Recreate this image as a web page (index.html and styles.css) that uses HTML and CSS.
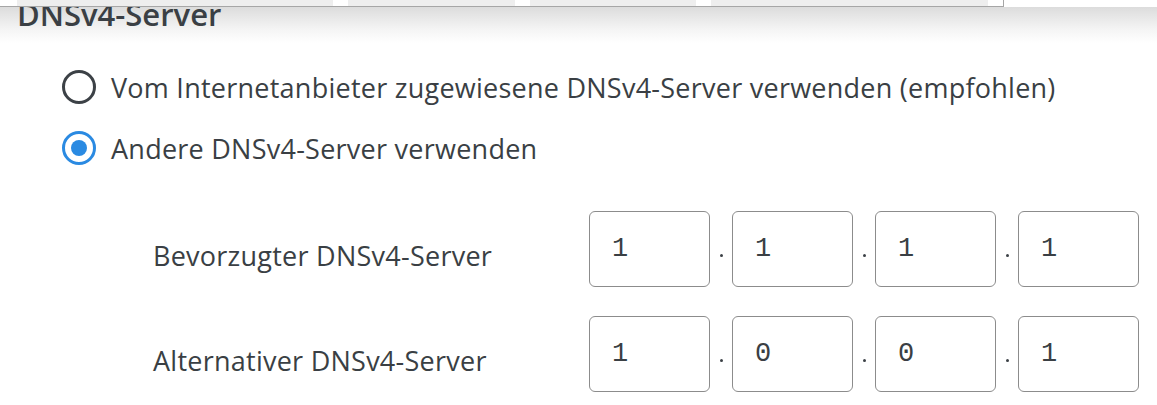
FILE: index.html
```html
<!DOCTYPE html>
<html lang="de">
<head>
<meta charset="utf-8">
<title>DNSv4-Server</title>
<link rel="stylesheet" href="styles.css">
</head>
<body>
<header class="tabbar">
  <div class="tabs">
    <div class="tab tab-1"></div>
    <div class="tab tab-2"></div>
    <div class="tab tab-3"></div>
    <div class="tab tab-4"></div>
  </div>
</header>
<main class="content">
  <h2 class="section-title">DNSv4-Server</h2>
  <div class="options">
    <label class="option">
      <span class="radio"></span>
      <span class="option-text">Vom Internetanbieter zugewiesene DNSv4-Server verwenden (empfohlen)</span>
    </label>
    <label class="option">
      <span class="radio radio-checked"><span class="radio-dot"></span></span>
      <span class="option-text">Andere DNSv4-Server verwenden</span>
    </label>
  </div>
  <div class="ip-rows">
    <div class="ip-row">
      <span class="ip-label">Bevorzugter DNSv4-Server</span>
      <div class="ip-fields">
        <span class="ip-box">1</span><span class="ip-dot"></span>
        <span class="ip-box">1</span><span class="ip-dot"></span>
        <span class="ip-box">1</span><span class="ip-dot"></span>
        <span class="ip-box">1</span>
      </div>
    </div>
    <div class="ip-row">
      <span class="ip-label">Alternativer DNSv4-Server</span>
      <div class="ip-fields">
        <span class="ip-box">1</span><span class="ip-dot"></span>
        <span class="ip-box">0</span><span class="ip-dot"></span>
        <span class="ip-box">0</span><span class="ip-dot"></span>
        <span class="ip-box">1</span>
      </div>
    </div>
  </div>
</main>
</body>
</html>
```
FILE: styles.css
```css
* { box-sizing: border-box; }
html, body { margin: 0; padding: 0; }
body {
  width: 1157px;
  height: 405px;
  overflow: hidden;
  background: #ffffff;
  font-family: "Open Sans", "Noto Sans", sans-serif;
  color: #3a3f44;
  display: flex;
  flex-direction: column;
}
.tabbar {
  height: 7px;
  flex: none;
}
.tabs {
  width: 1004px;
  height: 7px;
  display: flex;
  gap: 15px;
  padding-left: 17px;
  padding-right: 15px;
  border-bottom: 1px solid #a6a6a6;
  border-right: 1px solid #a6a6a6;
}
.tab { background: #eeeeee; height: 6px; }
.tab-1 { width: 316px; }
.tab-2 { width: 167px; }
.tab-3 { width: 166px; }
.tab-4 { flex: 1; }
.content {
  flex: 1;
  overflow: hidden;
  background: linear-gradient(#dcdcdc 0, #f4f4f4 22px, #ffffff 36px);
}
.section-title {
  margin: -8px 0 0 17px;
  font-size: 31px;
  line-height: 31px;
  font-weight: 600;
}
.options {
  display: flex;
  flex-direction: column;
  gap: 27px;
  margin: 40px 0 0 62px;
}
.option {
  display: flex;
  align-items: center;
  gap: 15px;
  height: 34px;
}
.radio {
  width: 34px;
  height: 34px;
  border: 3px solid #3c4146;
  border-radius: 50%;
  display: flex;
  align-items: center;
  justify-content: center;
  flex: none;
}
.radio-checked { border-color: #2a8ae2; }
.radio-dot {
  width: 16px;
  height: 16px;
  border-radius: 50%;
  background: #2a8ae2;
}
.option-text {
  font-size: 27px;
  letter-spacing: 0.25px;
  line-height: 34px;
  padding-top: 2px;
}
.ip-rows {
  display: flex;
  flex-direction: column;
  gap: 29px;
  margin-top: 46px;
  padding-left: 153px;
}
.ip-row {
  display: flex;
  align-items: center;
}
.ip-label {
  width: 436px;
  font-size: 27px;
  letter-spacing: 0.25px;
  line-height: 30px;
  padding-top: 14px;
}
.ip-fields {
  display: flex;
  align-items: center;
}
.ip-box {
  width: 121px;
  height: 76px;
  border: 1px solid #8c8c8c;
  border-radius: 6px;
  padding-left: 22px;
  display: flex;
  align-items: center;
  font-family: "Liberation Mono", monospace;
  font-size: 27px;
  color: #3a3f44;
}
.ip-dot {
  width: 22px;
  display: flex;
  justify-content: center;
  align-self: center;
  margin-top: 12px;
}
.ip-dot::before {
  content: "";
  width: 3px;
  height: 3px;
  border-radius: 50%;
  background: #3c4146;
}
```
